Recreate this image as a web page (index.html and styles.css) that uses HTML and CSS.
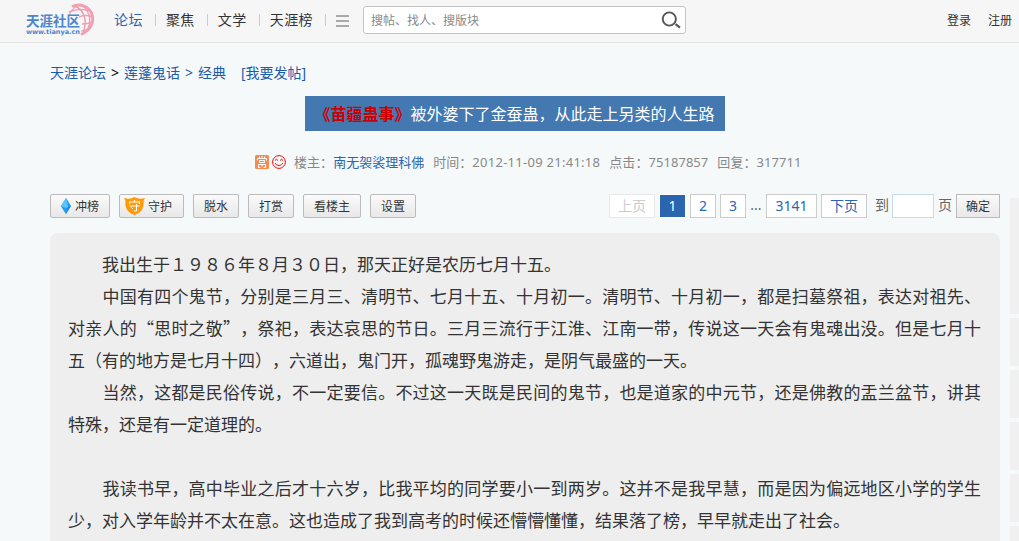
FILE: index.html
```html
<!DOCTYPE html>
<html lang="zh-CN">
<head>
    <meta charset="UTF-8">
    <title>《苗疆蛊事》被外婆下了金蚕蛊，从此走上另类的人生路</title>
    <link rel="stylesheet" href="styles.css">
</head>
<body>
    <div class="top-nav">
        <a class="logo" href="#">
            <svg width="72" height="36" viewBox="0 0 72 36">
                <g fill="none" stroke="#f0a0b2" stroke-width="1.5">
                    <path d="M46 3.500C54 0 62 3 65.500 10C69 19 65 27 55 31.500" stroke-width="2.800"/>
                    <path d="M49 3C58 7 62 17 57 30"/>
                    <path d="M56 2C65 10 66 20 60 29"/>
                    <path d="M43 9C50 6 58 6 64 8"/>
                    <path d="M53 14C58 12 62 12 67 14"/>
                    <path d="M56 21C60 21 64 20 67 19"/>
                    <path d="M55 28C59 28 62 26 65 24"/>
                    <path d="M43 13C44 8 47 5 53 2" stroke-width="1.2"/>
                </g>
                <text class="logo-name" x="0" y="22.500" textLength="54">天涯社区</text>
                <text class="logo-url" x="0" y="30.500" textLength="54">www.tianya.cn</text>
            </svg>
        </a>
        <ul class="nav-list">
            <li><a class="current" href="#">论坛</a></li>
            <li><a href="#">聚焦</a></li>
            <li><a href="#">文学</a></li>
            <li><a href="#">天涯榜</a></li>
        </ul>
        <div class="nav-more"><i></i><i></i><i></i></div>
        <div class="search">
            <span>搜帖、找人、搜版块</span>
            <svg width="20" height="20" viewBox="0 0 20 20" fill="none" stroke="#555">
                <circle cx="8.3" cy="9" r="6.6" stroke-width="1.9"/>
                <path d="M14.5 14.2L19 17.7" stroke-width="2.2"/>
            </svg>
        </div>
        <div class="user-links">
            <a href="#">登录</a>
            <a href="#">注册</a>
        </div>
    </div>

    <div class="page">
        <div class="main">
            <div class="crumbs">
                <a href="#">天涯论坛</a><b>&gt;</b><a href="#">莲蓬鬼话</a><i>&gt;</i><a href="#">经典</a><a class="post" href="#">[我要发帖]</a>
            </div>
            <h1 class="title"><strong>《苗疆蛊事》</strong>被外婆下了金蚕蛊，从此走上另类的人生路</h1>
            <div class="info">
                <svg class="icon-reward" width="14" height="14" viewBox="0 0 14 14">
                    <rect width="14" height="14" rx="1.5" fill="#f58b51"/>
                    <path d="M7 1V3M4.500 1.500V3M9.500 1.500V3M2.500 5.500V3.500H11.500V5.500M4.500 5.500H9.500V7.500H4.500ZM3.500 12V9.500H10.500V12M7 10V11.500M5.500 12.500H3M8.500 12.500H11" fill="none" stroke="#fff"/>
                </svg>
                <svg class="icon-smile" width="14" height="14" viewBox="0 0 14 14" fill="none" stroke="#f00">
                    <circle cx="7" cy="7" r="6.4"/>
                    <path d="M3 5.500L4.500 4.300L6 5.500M8 5.500L9.500 4.300L11 5.500M3.200 8C4.500 11.300 9.500 11.300 10.800 8"/>
                </svg>
                <span>楼主：<a href="#">南无袈裟理科佛</a></span>
                <span>时间：<em>2012-11-09 21:41:18</em></span>
                <span>点击：75187857</span>
                <span>回复：317711</span>
            </div>

            <div class="toolbar">
                <div class="actions">
                    <a class="btn btn-rank" href="#">
                        <svg width="10" height="16" viewBox="0 0 10 16">
                            <path d="M5 0L10 8L5 16L0 8Z" fill="#1e9cf5"/>
                            <path d="M5 0L7 8L5 16L0 8Z" fill="#5cc4ff"/>
                            <path d="M5 16L0 8L5 10L10 8Z" fill="#087fe0" opacity=".6"/>
                        </svg>冲榜</a>
                    <a class="btn btn-guard" href="#">
                        <svg width="21" height="18" viewBox="0 0 21 18">
                            <path d="M0 1C4 2 7 2 10.500 0C14 2 17 2 21 1L19.500 4C20.500 11 17 16 10.500 18C4 16 .5 11 1.500 4Z" fill="#ff9a08"/>
                            <path d="M10.500 3V5M5.500 7V5H15.500V7M5.500 9H15.500M12.500 7V14H10M7.500 10.500L9 12" fill="none" stroke="#fff"/>
                        </svg>守护</a>
                    <a class="btn" href="#">脱水</a>
                    <a class="btn" href="#">打赏</a>
                    <a class="btn" href="#">看楼主</a>
                    <a class="btn" href="#">设置</a>
                </div>
                <div class="pages">
                    <span class="num disabled">上页</span>
                    <strong class="num on">1</strong>
                    <a class="num" href="#">2</a>
                    <a class="num" href="#">3</a>
                    <span class="dots">...</span>
                    <a class="num last" href="#">3141</a>
                    <a class="num" href="#">下页</a>
                    <span class="goto">到<input type="text">页</span>
                    <a class="btn btn-ok" href="#">确定</a>
                </div>
            </div>

            <div class="post-content">
                　　我出生于１９８６年８月３０日，那天正好是农历七月十五。<br>
                　　中国有四个鬼节，分别是三月三、清明节、七月十五、十月初一。清明节、十月初一，都是扫墓祭祖，表达对祖先、对亲人的“思时之敬”，祭祀，表达哀思的节日。三月三流行于江淮、江南一带，传说这一天会有鬼魂出没。但是七月十五（有的地方是七月十四），六道出，鬼门开，孤魂野鬼游走，是阴气最盛的一天。<br>
                　　当然，这都是民俗传说，不一定要信。不过这一天既是民间的鬼节，也是道家的中元节，还是佛教的盂兰盆节，讲其特殊，还是有一定道理的。<br>
                <br>
                　　我读书早，高中毕业之后才十六岁，比我平均的同学要小一到两岁。这并不是我早慧，而是因为偏远地区小学的学生少，对入学年龄并不太在意。这也造成了我到高考的时候还懵懵懂懂，结果落了榜，早早就走出了社会。
            </div>
        </div>
        <div class="side">
            <div class="side-box side-first"></div>
            <div class="side-box"></div>
            <div class="side-box"></div>
            <div class="side-box"></div>
            <div class="side-box"></div>
            <div class="side-box side-last"></div>
        </div>
    </div>
</body>
</html>
```
FILE: styles.css
```css
* {
    box-sizing: border-box;
}
html, body {
    height: 100%;
    overflow: hidden;
}
body {
    margin: 0;
    background: #f5f9fa;
    color: #333;
    font-family: "Noto Sans", "Noto Sans CJK SC", sans-serif;
    font-size: 14px;
    display: flex;
    flex-direction: column;
}
a {
    color: #1a5cab;
    text-decoration: none;
}

/* top nav */
.top-nav {
    flex: none;
    display: flex;
    align-items: center;
    height: 43px;
    padding: 0 7px 2px 26px;
    background: #f6f6f6;
    border-bottom: 1px solid #e3e3e3;
}
.top-nav a {
    color: #333;
}
.logo, .logo svg {
    display: block;
}
.logo {
    width: 78px;
    padding-top: 2px;
}
.logo .logo-name {
    font-size: 13.5px;
    font-weight: bold;
    fill: #4a86cc;
}
.logo .logo-url {
    font-family: "DejaVu Sans", sans-serif;
    font-size: 6.5px;
    font-weight: bold;
    fill: #4a86cc;
}
.nav-list {
    display: flex;
    margin: 0;
    padding: 0;
    list-style: none;
    line-height: 20px;
}
.nav-list li {
    display: flex;
    align-items: center;
    padding-left: 10px;
    letter-spacing: .45px;
}
.nav-list li::after {
    content: "";
    width: 1px;
    height: 12px;
    margin-left: 12px;
    background: #ccc;
}
.top-nav .current {
    color: #2b65b0;
}
.nav-more {
    width: 13px;
    margin: 2px 14px 0 10px;
}
.nav-more i {
    display: block;
    height: 2px;
    margin-bottom: 3px;
    background: #aaa;
}
.nav-more i:last-child {
    margin-bottom: 0;
}
.search {
    display: flex;
    align-items: center;
    justify-content: space-between;
    width: 323px;
    height: 28px;
    padding: 0 4px 0 7px;
    border: 1px solid #c4c4c4;
    border-radius: 3px;
    background: #fff;
    color: #888;
    font-size: 12px;
}
.user-links {
    display: flex;
    gap: 17px;
    margin-left: auto;
    font-size: 12px;
}

/* layout */
.page {
    flex: 1;
    min-height: 0;
    display: flex;
    gap: 10px;
    padding-left: 50px;
}
.main {
    flex: none;
    width: 950px;
    display: flex;
    flex-direction: column;
}
.side {
    flex: 1;
    display: flex;
    flex-direction: column;
    gap: 4px;
    padding-top: 155px;
}
.side-box {
    height: 48px;
    background: #f0f0f0;
}
.side-first {
    height: 116px;
}
.side-last {
    flex: 1;
    height: auto;
}

.crumbs {
    display: flex;
    height: 20px;
    margin-top: 20px;
    line-height: 20px;
}
.crumbs b, .crumbs i {
    width: 18px;
    font-style: normal;
    font-weight: normal;
    text-align: center;
}
.crumbs b {
    color: #000;
}
.crumbs i {
    color: #1a5cab;
}
.crumbs .post {
    margin-left: 15px;
}

.title {
    align-self: center;
    width: 420px;
    height: 35px;
    margin: 13px 0 0 -20px;
    padding-left: 9.5px;
    background: #4378b1;
    color: #fff;
    font-size: 16px;
    font-weight: normal;
    line-height: 36px;
    white-space: nowrap;
}
.title strong {
    color: #c00;
}
.info {
    display: flex;
    align-items: center;
    height: 20px;
    margin: 21px 0 22px 205px;
    color: #888;
    font-size: 13px;
    line-height: 20px;
}
.info span {
    margin-right: 9px;
    letter-spacing: .05px;
}
.info em {
    font-style: normal;
    letter-spacing: .27px;
}
.info a {
    color: #2b65b0;
    letter-spacing: 0;
}
.icon-reward {
    margin-right: 3px;
}
.icon-smile {
    margin-right: 8px;
}

/* buttons + pager */
.toolbar {
    display: flex;
    justify-content: space-between;
    height: 24px;
}
.actions {
    display: flex;
    gap: 9px;
}
.btn {
    display: flex;
    align-items: center;
    height: 24px;
    padding: 1px 10px 0;
    border: 1px solid #bbb;
    border-radius: 2px;
    background: linear-gradient(#fafafa, #e8e8e8);
    color: #333;
    font-size: 12px;
    line-height: 22px;
}
.btn-rank svg {
    margin: -2px 4px 0 0;
}
.btn-guard {
    padding: 1px 11px 0 4px;
}
.btn-guard svg {
    margin: -2px 3px 0 0;
}
.pages {
    display: flex;
    gap: 4px;
    line-height: 22px;
}
.num {
    height: 24px;
    padding: 0 8px;
    border: 1px solid #ccc;
    background: #fff;
    color: #2b65b0;
    font-weight: normal;
}
.pages .disabled {
    border-color: #e8eaea;
    color: #ccc;
}
.pages .on {
    padding: 0 8.5px;
    border-color: #fff;
    background: #2b65b0;
    color: #fff;
}
.pages .last {
    padding: 0 8.5px;
}
.dots {
    width: 12px;
    color: #666;
    text-align: center;
}
.goto {
    display: flex;
    margin-left: 4px;
    color: #666;
}
.goto input {
    width: 42px;
    height: 24px;
    margin: 0 4px 0 3px;
    padding: 0;
    border: 1px solid #c8dbe8;
    background: #fff;
}
.btn-ok {
    padding: 1px 9px 0;
    border-radius: 0;
}

.post-content {
    flex: 1;
    margin-top: 15px;
    padding: 15px 19px 0 18px;
    border-radius: 8px 8px 0 0;
    background: #eee;
    font-family: "Noto Sans CJK SC", sans-serif;
    font-size: 17px;
    line-height: 32px;
    text-align: justify;
    text-spacing-trim: space-all;
}
```
